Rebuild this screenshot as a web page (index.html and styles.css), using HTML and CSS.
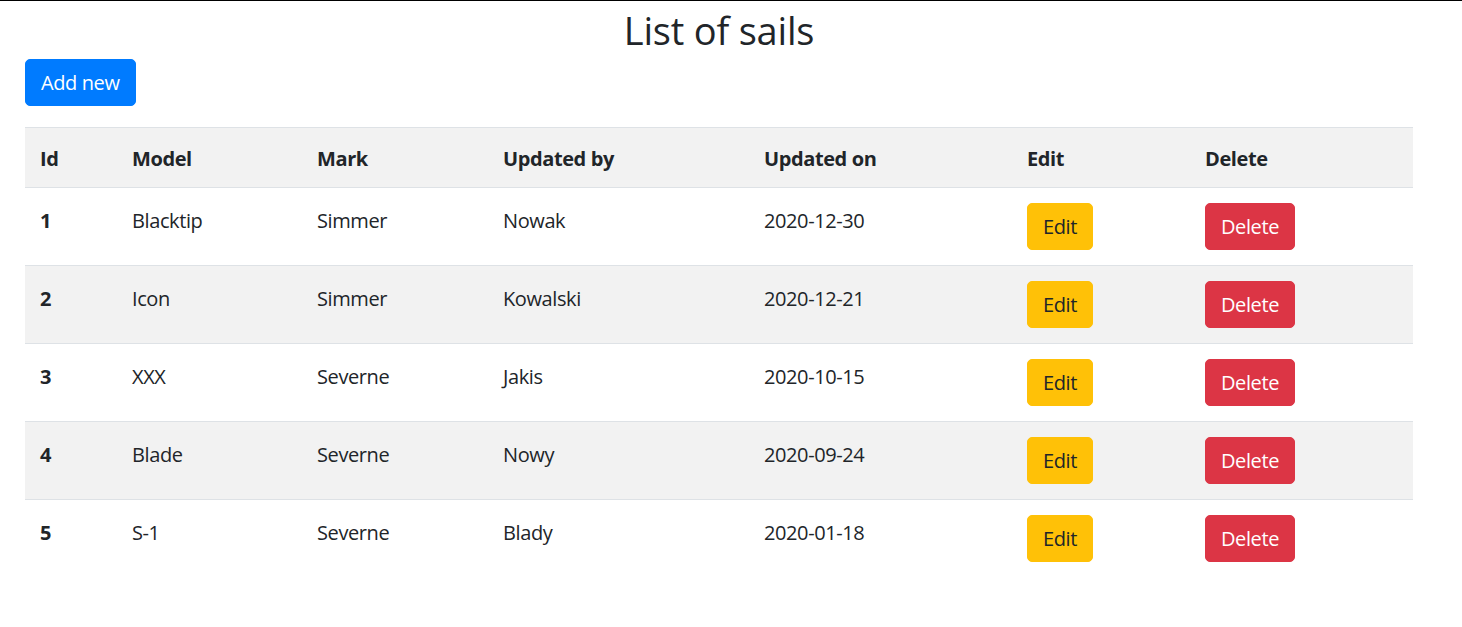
FILE: index.html
```html
<!DOCTYPE html>
<html lang="en">
<head>
<meta charset="utf-8">
<title>List of sails</title>
<link rel="stylesheet" href="styles.css">
</head>
<body>
<div class="page">
  <h1 class="title">List of sails</h1>
  <button class="btn btn-primary">Add new</button>
  <table class="table">
    <colgroup>
      <col class="c-id"><col class="c-model"><col class="c-mark"><col class="c-by"><col class="c-on"><col class="c-edit"><col class="c-del">
    </colgroup>
    <thead>
      <tr><th>Id</th><th>Model</th><th>Mark</th><th>Updated by</th><th>Updated on</th><th>Edit</th><th>Delete</th></tr>
    </thead>
    <tbody>
      <tr><th>1</th><td>Blacktip</td><td>Simmer</td><td>Nowak</td><td>2020-12-30</td><td class="act"><button class="btn btn-warning">Edit</button></td><td class="act"><button class="btn btn-danger">Delete</button></td></tr>
      <tr><th>2</th><td>Icon</td><td>Simmer</td><td>Kowalski</td><td>2020-12-21</td><td class="act"><button class="btn btn-warning">Edit</button></td><td class="act"><button class="btn btn-danger">Delete</button></td></tr>
      <tr><th>3</th><td>XXX</td><td>Severne</td><td>Jakis</td><td>2020-10-15</td><td class="act"><button class="btn btn-warning">Edit</button></td><td class="act"><button class="btn btn-danger">Delete</button></td></tr>
      <tr><th>4</th><td>Blade</td><td>Severne</td><td>Nowy</td><td>2020-09-24</td><td class="act"><button class="btn btn-warning">Edit</button></td><td class="act"><button class="btn btn-danger">Delete</button></td></tr>
      <tr><th>5</th><td>S-1</td><td>Severne</td><td>Blady</td><td>2020-01-18</td><td class="act"><button class="btn btn-warning">Edit</button></td><td class="act"><button class="btn btn-danger">Delete</button></td></tr>
    </tbody>
  </table>
</div>
</body>
</html>
```
FILE: styles.css
```css
* { box-sizing: border-box; }
html, body { margin: 0; padding: 0; }
body {
  font-family: "Open Sans", "Noto Sans", sans-serif;
  font-size: 20px;
  line-height: 30px;
  letter-spacing: -0.4px;
  color: #212529;
  background: #fff;
  border-top: 1px solid #000;
}
.page {
  width: 1388px;
  margin-left: 25px;
}
.title {
  margin: 0;
  font-size: 38px;
  font-weight: 400;
  line-height: 58px;
  letter-spacing: -0.2px;
  text-align: center;
  color: #212529;
}
.btn {
  display: inline-block;
  font-family: inherit;
  font-size: 20px;
  line-height: 30px;
  letter-spacing: -0.4px;
  padding: 8px 15px 7px;
  border: 1px solid transparent;
  border-radius: 5px;
  cursor: pointer;
}
.btn-primary { background: #007bff; color: #fff; border-color: #007bff; }
.btn-warning { background: #ffc107; color: #212529; border-color: #ffc107; }
.btn-danger { background: #dc3545; color: #fff; border-color: #dc3545; }
.table {
  width: 1388px;
  margin-top: 21px;
  border-collapse: collapse;
  table-layout: fixed;
}
.c-id { width: 92px; }
.c-model { width: 185px; }
.c-mark { width: 186px; }
.c-by { width: 261px; }
.c-on { width: 263px; }
.c-edit { width: 178px; }
.c-del { width: 223px; }
.table th, .table td {
  padding: 18px 15px 12px;
  text-align: left;
  vertical-align: top;
  border-top: 1px solid #dee2e6;
}
.table td.act { padding: 15px; }
.table th { font-weight: 700; }
.table thead th {
  background: #f2f2f2;
  padding: 16px 15px 13px;
  border-bottom: 1px solid #dee2e6;
}
.table tbody tr:nth-child(even) { background: #f2f2f2; }
.table tbody tr:first-child th, .table tbody tr:first-child td { border-top: 0; }
```
